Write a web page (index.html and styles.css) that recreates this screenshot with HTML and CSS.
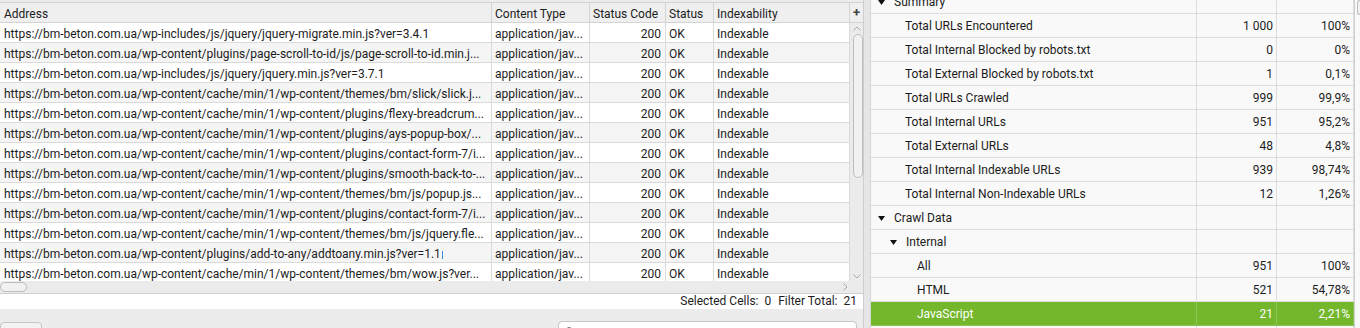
FILE: index.html
```html
<!DOCTYPE html>
<html lang="en">
<head>
  <meta charset="UTF-8">
  <title>Crawl - bm-beton.com.ua</title>
  <link rel="stylesheet" href="styles.css">
</head>
<body>
  <div class="app">
    <div class="left-pane">
      <div class="grid">
        <div class="grid-body">
          <div class="row head">
            <div class="cell">Address</div>
            <div class="cell">Content Type</div>
            <div class="cell">Status Code</div>
            <div class="cell">Status</div>
            <div class="cell">Indexability</div>
          </div>
          <div class="row">
            <div class="cell">https://bm-beton.com.ua/wp-includes/js/jquery/jquery-migrate.min.js?ver=3.4.1</div>
            <div class="cell">application/jav...</div>
            <div class="cell num">200</div>
            <div class="cell">OK</div>
            <div class="cell">Indexable</div>
          </div>
          <div class="row">
            <div class="cell">https://bm-beton.com.ua/wp-content/plugins/page-scroll-to-id/js/page-scroll-to-id.min.j...</div>
            <div class="cell">application/jav...</div>
            <div class="cell num">200</div>
            <div class="cell">OK</div>
            <div class="cell">Indexable</div>
          </div>
          <div class="row">
            <div class="cell">https://bm-beton.com.ua/wp-includes/js/jquery/jquery.min.js?ver=3.7.1</div>
            <div class="cell">application/jav...</div>
            <div class="cell num">200</div>
            <div class="cell">OK</div>
            <div class="cell">Indexable</div>
          </div>
          <div class="row">
            <div class="cell">https://bm-beton.com.ua/wp-content/cache/min/1/wp-content/themes/bm/slick/slick.j...</div>
            <div class="cell">application/jav...</div>
            <div class="cell num">200</div>
            <div class="cell">OK</div>
            <div class="cell">Indexable</div>
          </div>
          <div class="row">
            <div class="cell">https://bm-beton.com.ua/wp-content/cache/min/1/wp-content/plugins/flexy-breadcrum...</div>
            <div class="cell">application/jav...</div>
            <div class="cell num">200</div>
            <div class="cell">OK</div>
            <div class="cell">Indexable</div>
          </div>
          <div class="row">
            <div class="cell">https://bm-beton.com.ua/wp-content/cache/min/1/wp-content/plugins/ays-popup-box/...</div>
            <div class="cell">application/jav...</div>
            <div class="cell num">200</div>
            <div class="cell">OK</div>
            <div class="cell">Indexable</div>
          </div>
          <div class="row">
            <div class="cell">https://bm-beton.com.ua/wp-content/cache/min/1/wp-content/plugins/contact-form-7/i...</div>
            <div class="cell">application/jav...</div>
            <div class="cell num">200</div>
            <div class="cell">OK</div>
            <div class="cell">Indexable</div>
          </div>
          <div class="row">
            <div class="cell">https://bm-beton.com.ua/wp-content/cache/min/1/wp-content/plugins/smooth-back-to-...</div>
            <div class="cell">application/jav...</div>
            <div class="cell num">200</div>
            <div class="cell">OK</div>
            <div class="cell">Indexable</div>
          </div>
          <div class="row">
            <div class="cell">https://bm-beton.com.ua/wp-content/cache/min/1/wp-content/themes/bm/js/popup.js...</div>
            <div class="cell">application/jav...</div>
            <div class="cell num">200</div>
            <div class="cell">OK</div>
            <div class="cell">Indexable</div>
          </div>
          <div class="row">
            <div class="cell">https://bm-beton.com.ua/wp-content/cache/min/1/wp-content/plugins/contact-form-7/i...</div>
            <div class="cell">application/jav...</div>
            <div class="cell num">200</div>
            <div class="cell">OK</div>
            <div class="cell">Indexable</div>
          </div>
          <div class="row">
            <div class="cell">https://bm-beton.com.ua/wp-content/cache/min/1/wp-content/themes/bm/js/jquery.fle...</div>
            <div class="cell">application/jav...</div>
            <div class="cell num">200</div>
            <div class="cell">OK</div>
            <div class="cell">Indexable</div>
          </div>
          <div class="row">
            <div class="cell">https://bm-beton.com.ua/wp-content/plugins/add-to-any/addtoany.min.js?ver=1.1<span class="caret"></span></div>
            <div class="cell">application/jav...</div>
            <div class="cell num">200</div>
            <div class="cell">OK</div>
            <div class="cell">Indexable</div>
          </div>
          <div class="row">
            <div class="cell">https://bm-beton.com.ua/wp-content/cache/min/1/wp-content/themes/bm/wow.js?ver...</div>
            <div class="cell">application/jav...</div>
            <div class="cell num">200</div>
            <div class="cell">OK</div>
            <div class="cell">Indexable</div>
          </div>
        </div>
        <div class="vscroll">
          <div class="col-add">+</div>
          <div class="vtrack">
            <svg class="arrow" width="8" height="5" viewBox="0 0 8 5"><polyline points="0.5,4.5 4,1 7.5,4.5" /></svg>
            <div class="vthumb"></div>
            <svg class="arrow down" width="8" height="5" viewBox="0 0 8 5"><polyline points="0.5,0.5 4,4 7.5,0.5" /></svg>
          </div>
        </div>
      </div>
      <div class="hscroll">
        <div class="hthumb"></div>
        <svg class="arrow" width="5" height="8" viewBox="0 0 5 8"><polyline points="0.5,0.5 4,4 0.5,7.5" /></svg>
      </div>
      <div class="statusbar">
        <span>Selected Cells:</span><span class="val">0</span>
        <span class="label">Filter Total:</span><span class="val">21</span>
      </div>
      <div class="bottom-bar">
        <button class="btn"></button>
        <div class="search">
          <svg width="10" height="10" viewBox="0 0 10 10"><circle cx="4" cy="4" r="3" /><line x1="6.2" y1="6.2" x2="9" y2="9" /></svg>
        </div>
      </div>
    </div>

    <div class="splitter"></div>

    <div class="right-pane">
      <div class="overview">
        <div class="orow">
          <div class="ocell name lvl0"><span class="toggle"><svg width="7" height="5" viewBox="0 0 7 5"><polygon points="0,0 7,0 3.5,5" /></svg></span>Summary</div>
          <div class="ocell"></div><div class="ocell"></div>
        </div>
        <div class="orow">
          <div class="ocell name lvl1">Total URLs Encountered</div>
          <div class="ocell num">1 000</div><div class="ocell num">100%</div>
        </div>
        <div class="orow">
          <div class="ocell name lvl1">Total Internal Blocked by robots.txt</div>
          <div class="ocell num">0</div><div class="ocell num">0%</div>
        </div>
        <div class="orow">
          <div class="ocell name lvl1">Total External Blocked by robots.txt</div>
          <div class="ocell num">1</div><div class="ocell num">0,1%</div>
        </div>
        <div class="orow">
          <div class="ocell name lvl1">Total URLs Crawled</div>
          <div class="ocell num">999</div><div class="ocell num">99,9%</div>
        </div>
        <div class="orow">
          <div class="ocell name lvl1">Total Internal URLs</div>
          <div class="ocell num">951</div><div class="ocell num">95,2%</div>
        </div>
        <div class="orow">
          <div class="ocell name lvl1">Total External URLs</div>
          <div class="ocell num">48</div><div class="ocell num">4,8%</div>
        </div>
        <div class="orow">
          <div class="ocell name lvl1">Total Internal Indexable URLs</div>
          <div class="ocell num">939</div><div class="ocell num">98,74%</div>
        </div>
        <div class="orow">
          <div class="ocell name lvl1">Total Internal Non-Indexable URLs</div>
          <div class="ocell num">12</div><div class="ocell num">1,26%</div>
        </div>
        <div class="orow">
          <div class="ocell name lvl0"><span class="toggle"><svg width="7" height="5" viewBox="0 0 7 5"><polygon points="0,0 7,0 3.5,5" /></svg></span>Crawl Data</div>
          <div class="ocell"></div><div class="ocell"></div>
        </div>
        <div class="orow">
          <div class="ocell name lvl1t"><span class="toggle"><svg width="7" height="5" viewBox="0 0 7 5"><polygon points="0,0 7,0 3.5,5" /></svg></span>Internal</div>
          <div class="ocell"></div><div class="ocell"></div>
        </div>
        <div class="orow">
          <div class="ocell name lvl2">All</div>
          <div class="ocell num">951</div><div class="ocell num">100%</div>
        </div>
        <div class="orow">
          <div class="ocell name lvl2">HTML</div>
          <div class="ocell num">521</div><div class="ocell num">54,78%</div>
        </div>
        <div class="orow selected">
          <div class="ocell name lvl2">JavaScript</div>
          <div class="ocell num">21</div><div class="ocell num">2,21%</div>
        </div>
        <div class="orow">
          <div class="ocell name lvl2"></div>
          <div class="ocell num"></div><div class="ocell num"></div>
        </div>
      </div>
      <div class="rscroll"><div class="rthumb"></div></div>
    </div>
  </div>
</body>
</html>
```

FILE: styles.css
```css
* {
  box-sizing: border-box;
  margin: 0;
  padding: 0;
}

body {
  font-family: Roboto, "Liberation Sans", sans-serif;
  font-size: 12px;
  color: #1c1c1c;
  background: #ececec;
  height: 328px;
  overflow: hidden;
}

.app {
  display: flex;
  height: 328px;
}

/* left pane: url table */

.left-pane {
  width: 863px;
  display: flex;
  flex-direction: column;
}

.grid {
  flex-shrink: 0;
  margin-top: 2px;
  height: 279px;
  border-top: 1px solid #d2d2d2;
  display: flex;
  overflow: hidden;
}

.grid-body {
  width: 850px;
  background: #fff;
}

.row {
  display: grid;
  grid-template-columns: 492px 98px 76px 48px 136px;
}

.row:nth-child(odd) {
  background: #f5f5f5;
}

.row.head {
  background: #efefef;
}

.cell {
  height: 20px;
  line-height: 16px;
  padding: 3px 3px 0;
  border-right: 1px solid #dadada;
  border-bottom: 1px solid #dadada;
  white-space: nowrap;
  overflow: hidden;
}

.row .cell:first-child {
  padding-left: 4px;
}

.head .cell {
  border-color: #d4d4d4;
}

.cell.num {
  text-align: right;
  padding-right: 4px;
}

.caret {
  display: inline-block;
  width: 1px;
  height: 8px;
  margin-left: 1px;
  background: #3d8fe0;
  vertical-align: -1px;
}

.vscroll {
  width: 13px;
  display: flex;
  flex-direction: column;
}

.col-add {
  height: 20px;
  line-height: 19px;
  background: #efefef;
  border-bottom: 1px solid #d4d4d4;
  text-align: center;
  font-weight: bold;
  font-size: 13px;
  color: #444;
}

.vtrack {
  flex: 1;
  background: #ebebeb;
  display: flex;
  flex-direction: column;
  align-items: center;
  padding-top: 3px;
}

.arrow {
  fill: none;
  stroke: #a8a8a8;
  stroke-width: 1;
}

.vthumb {
  width: 10px;
  height: 144px;
  margin-top: 3px;
  margin-left: 2px;
  background: #f1f1f1;
  border: 1px solid #bdbdbd;
  border-radius: 5px;
}

.vtrack .down {
  margin-top: auto;
  margin-bottom: 2px;
}

.hscroll {
  flex-shrink: 0;
  height: 13px;
  background: #ebebeb;
  border-bottom: 1px solid #cfcfcf;
  display: flex;
  align-items: center;
  padding-right: 15px;
}

.hthumb {
  width: 27px;
  height: 10px;
  background: #f1f1f1;
  border: 1px solid #bdbdbd;
  border-radius: 5px;
}

.hscroll .arrow {
  margin-left: auto;
}

.statusbar {
  flex-shrink: 0;
  height: 15px;
  line-height: 15px;
  background: #fff;
  text-align: right;
  padding-right: 6px;
  white-space: nowrap;
}

.statusbar .val {
  margin-left: 6px;
}

.statusbar .label {
  margin-left: 4px;
}

.bottom-bar {
  flex: 1;
  min-height: 0;
  overflow: hidden;
  display: flex;
  align-items: flex-start;
  padding-right: 6px;
}

.btn {
  flex-shrink: 0;
  width: 42px;
  height: 20px;
  margin-top: 13px;
  background: #f3f3f3;
  border: 1px solid #c6c6c6;
  border-radius: 4px;
}

.search {
  flex-shrink: 0;
  width: 299px;
  height: 20px;
  margin-top: 12px;
  margin-left: auto;
  background: #fff;
  border: 1px solid #c6c6c6;
  border-radius: 4px;
  padding: 4px 0 0 6px;
}

.search svg {
  fill: none;
  stroke: #444;
  stroke-width: 1.3;
}

/* divider between panes */

.splitter {
  width: 7px;
  background: #e6e6e6;
  border-left: 1px solid #cdcdcd;
}

/* right pane: overview tree */

.right-pane {
  flex: 1;
  display: flex;
  background: #f9f9f9;
  border-left: 1px solid #d6d6d6;
  overflow: hidden;
}

.overview {
  width: 483px;
  margin-top: -10px;
}

.orow {
  display: grid;
  grid-template-columns: 326px 80px 77px;
}

.ocell {
  height: 24px;
  line-height: 22px;
  padding-top: 1px;
  border-right: 1px solid #dcdcdc;
  border-bottom: 1px solid #dcdcdc;
  white-space: nowrap;
}

.ocell.num {
  text-align: right;
  padding-right: 3px;
}

.ocell.name {
  display: flex;
  align-items: center;
}

.lvl0 {
  padding-left: 7px;
}

.lvl1t {
  padding-left: 19px;
}

.lvl1 {
  padding-left: 34px;
}

.lvl2 {
  padding-left: 46px;
}

.toggle {
  width: 16px;
  display: flex;
  align-items: center;
}

.toggle svg {
  fill: #111;
}

.orow.selected {
  background: #74b72c;
  color: #fff;
  border-top: 1px solid #fff;
  margin-top: -1px;
}

.orow.selected .ocell {
  border-color: #8cc552;
}

.rscroll {
  flex: 1;
  border-left: 1px solid #d0d0d0;
  padding-left: 2px;
}

.rthumb {
  height: 15px;
  border: 1px solid #bdbdbd;
  border-right: none;
  border-radius: 5px 0 0 5px;
  background: #f1f1f1;
}
```
